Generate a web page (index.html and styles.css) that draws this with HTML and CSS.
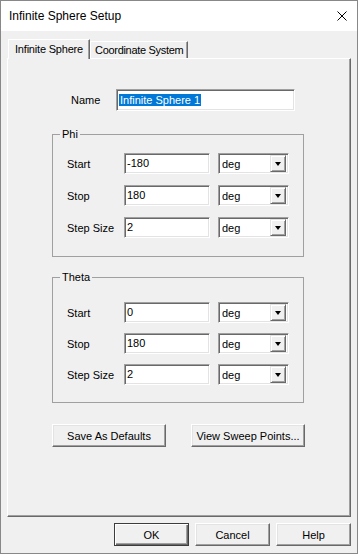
FILE: index.html
```html
<!DOCTYPE html>
<html lang="en">
<head>
    <meta charset="UTF-8">
    <title>Infinite Sphere Setup</title>
    <link rel="stylesheet" href="styles.css">
</head>
<body>

<div class="window">
    <div class="titlebar">
        <span class="title">Infinite Sphere Setup</span>
        <svg class="close" width="10" height="10" viewBox="0 0 10 10">
            <path d="M0.5 0.5 L9.5 9.5 M9.5 0.5 L0.5 9.5" stroke="#000" stroke-width="1" fill="none"/>
        </svg>
    </div>

    <div class="client">
        <div class="tabs">
            <div class="tab tab-active">Infinite Sphere</div>
            <div class="tab">Coordinate System</div>
        </div>

        <div class="panel">
            <div class="name-row">
                <span class="name-label">Name</span>
                <div class="textbox name-box"><span class="sel">Infinite Sphere 1</span></div>
            </div>

            <fieldset class="group group-phi">
                <legend>Phi</legend>
                <div class="rows">
                    <span class="label">Start</span>
                    <div class="textbox">-180</div>
                    <div class="combo"><span>deg</span><div class="combo-btn"><i></i></div></div>

                    <span class="label">Stop</span>
                    <div class="textbox">180</div>
                    <div class="combo"><span>deg</span><div class="combo-btn"><i></i></div></div>

                    <span class="label">Step Size</span>
                    <div class="textbox">2</div>
                    <div class="combo"><span>deg</span><div class="combo-btn"><i></i></div></div>
                </div>
            </fieldset>

            <fieldset class="group group-theta">
                <legend>Theta</legend>
                <div class="rows">
                    <span class="label">Start</span>
                    <div class="textbox">0</div>
                    <div class="combo"><span>deg</span><div class="combo-btn"><i></i></div></div>

                    <span class="label">Stop</span>
                    <div class="textbox">180</div>
                    <div class="combo"><span>deg</span><div class="combo-btn"><i></i></div></div>

                    <span class="label">Step Size</span>
                    <div class="textbox">2</div>
                    <div class="combo"><span>deg</span><div class="combo-btn"><i></i></div></div>
                </div>
            </fieldset>

            <div class="panel-buttons">
                <button class="btn wide">Save As Defaults</button>
                <button class="btn wide">View Sweep Points...</button>
            </div>
        </div>

        <div class="footer">
            <button class="btn btn-default">OK</button>
            <button class="btn">Cancel</button>
            <button class="btn">Help</button>
        </div>
    </div>
</div>

</body>
</html>
```

FILE: styles.css
```css
body {
    margin: 0;
    font-family: "Liberation Sans", Arial, sans-serif;
    font-size: 11px;
    color: #000;
    background: #f0f0f0;
}

.window {
    width: 358px;
    height: 554px;
    box-sizing: border-box;
    border: 1px solid #888;
    display: flex;
    flex-direction: column;
    background: #f0f0f0;
}

/* Title bar */
.titlebar {
    height: 30px;
    background: #fff;
    display: flex;
    align-items: center;
    justify-content: space-between;
    padding: 0 10px 0 8px;
}

.title {
    font-size: 12px;
}

.close {
    display: block;
}

/* Client area */
.client {
    flex: 1;
    padding: 8px 6px 0 6px;
}

.tabs {
    display: flex;
    align-items: flex-end;
    height: 20px;
    margin-bottom: -1px;
    padding-left: 1px;
    position: relative;
    z-index: 1;
}

.tab {
    height: 17px;
    box-sizing: border-box;
    width: 98px;
    padding-left: 4px;
    line-height: 16px;
    margin-bottom: 1px;
    white-space: nowrap;
    letter-spacing: -0.3px;
    background: #f0f0f0;
    border-top: 1px solid #fff;
    border-left: 1px solid #fff;
    border-right: 1px solid #696969;
    box-shadow: inset -1px 0 #a0a0a0;
}

.tab-active {
    width: 82px;
    height: 20px;
    margin-bottom: 0;
    padding-left: 6px;
    line-height: 18px;
    letter-spacing: -0.2px;
}

.panel {
    height: 459px;
    box-sizing: border-box;
    border-top: 1px solid #fff;
    border-left: 1px solid #fff;
    border-right: 1px solid #696969;
    border-bottom: 1px solid #696969;
    box-shadow: inset -1px -1px #a0a0a0;
    padding: 30px 0 0 44px;
}

/* Name */
.name-row {
    display: flex;
    align-items: center;
    padding-left: 19px;
}

.name-label {
    width: 45px;
}

.textbox {
    height: 21px;
    box-sizing: border-box;
    background: #fff;
    border-top: 1px solid #a0a0a0;
    border-left: 1px solid #a0a0a0;
    border-right: 1px solid #fff;
    border-bottom: 1px solid #fff;
    box-shadow: inset 1px 1px #696969, inset -1px -1px #e3e3e3;
    padding-left: 2px;
    line-height: 19px;
    white-space: nowrap;
    overflow: hidden;
}

.name-box {
    width: 179px;
    height: 22px;
    line-height: 20px;
}

.sel {
    background: #0078d7;
    color: #fff;
    padding: 0 1px;
}

/* Group boxes */
.group {
    width: 252px;
    box-sizing: border-box;
    margin: 17px 0 0 0;
    border: 1px solid #a0a0a0;
    padding: 12px 7px 18px 7px;
    min-width: 0;
}

.group legend {
    padding: 0 2px;
    line-height: 13px;
}

.group-theta {
    margin-top: 14px;
    padding-top: 18px;
    padding-bottom: 17px;
}

.rows {
    display: grid;
    grid-template-columns: 49px 86px 71px;
    column-gap: 8px;
    row-gap: 11px;
    align-items: center;
    margin: 0 7px;
}

.group-theta .rows {
    row-gap: 10px;
}

.label {
    white-space: nowrap;
}

.combo {
    height: 21px;
    box-sizing: border-box;
    background: #fff;
    border-top: 1px solid #a0a0a0;
    border-left: 1px solid #a0a0a0;
    border-right: 1px solid #fff;
    border-bottom: 1px solid #fff;
    box-shadow: inset 1px 1px #696969, inset -1px -1px #e3e3e3;
    display: flex;
    align-items: center;
    justify-content: space-between;
    padding: 0 2px 0 3px;
}

.combo-btn {
    width: 16px;
    height: 17px;
    box-sizing: border-box;
    background: #f0f0f0;
    border-top: 1px solid #e3e3e3;
    border-left: 1px solid #e3e3e3;
    border-right: 1px solid #696969;
    border-bottom: 1px solid #696969;
    box-shadow: inset 1px 1px #fff, inset -1px -1px #a0a0a0;
    display: flex;
    align-items: center;
    justify-content: center;
}

.combo-btn i {
    width: 0;
    height: 0;
    border-left: 3.5px solid transparent;
    border-right: 3.5px solid transparent;
    border-top: 4px solid #000;
    margin-top: 1px;
}

/* Buttons */
.panel-buttons {
    display: flex;
    gap: 25px;
    margin-top: 21px;
}

.btn {
    width: 75px;
    height: 23px;
    box-sizing: border-box;
    font-family: "Liberation Sans", Arial, sans-serif;
    font-size: 11px;
    color: #000;
    background: #f0f0f0;
    border: 1px solid;
    border-color: #fff #696969 #696969 #fff;
    box-shadow: inset -1px -1px #a0a0a0, inset 1px 1px #e3e3e3;
    padding: 0;
    margin: 0;
}

.btn.wide {
    width: 114px;
}

.btn-default {
    border-color: #3c3c3c;
    box-shadow: inset 1px 1px #fff, inset -1px -1px #696969, inset -2px -2px #a0a0a0;
}

.footer {
    display: flex;
    justify-content: flex-end;
    gap: 6px;
    margin-top: 6px;
}
```
